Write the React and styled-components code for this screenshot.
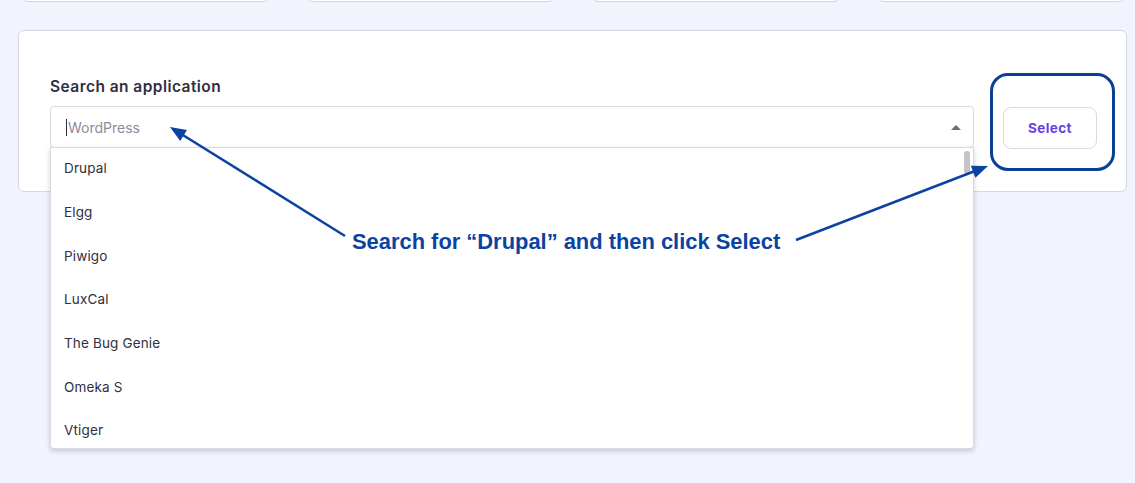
import React from 'react'
import styled, { createGlobalStyle } from 'styled-components'

const GlobalStyle = createGlobalStyle`
  html, body {
    margin: 0;
    padding: 0;
    background: #f1f3fd;
    font-family: Inter, "Noto Sans", "Liberation Sans", sans-serif;
    overflow: hidden;
  }
`

const Page = styled.div`
  position: relative;
  display: flow-root;
  width: 1135px;
  height: 483px;
  padding: 0 8px 0 18px;
  box-sizing: border-box;
`

const StatRow = styled.div`
  display: grid;
  grid-template-columns: repeat(4, 248px);
  column-gap: 37px;
  margin: -40px 0 0 4px;
  height: 42px;
`

const StatCard = styled.div`
  background: #fff;
  border: 1px solid #d6d6df;
  border-radius: 6px;
`

const Panel = styled.section`
  margin-top: 28px;
  width: 1109px;
  height: 162px;
  box-sizing: border-box;
  background: #fff;
  border: 1px solid #d6d6df;
  border-radius: 6px;
  padding: 46px 29px 0 31px;
`

const Label = styled.div`
  font-size: 15.5px;
  font-weight: 600;
  color: #2f2f3d;
  margin-bottom: 10px;
  letter-spacing: 0.45px;
`

const Row = styled.div`
  display: flex;
  align-items: flex-start;
  gap: 29px;
`

const Combo = styled.div`
  position: relative;
  flex: 1;
`

const Input = styled.div`
  height: 42px;
  box-sizing: border-box;
  border: 1px solid #dadae2;
  border-radius: 4px;
  display: flex;
  align-items: center;
  padding: 0 10px 0 15px;
  font-size: 14px;
  color: #8c8c9c;
`

const Caret = styled.span`
  width: 1px;
  height: 17px;
  background: #2f2f3d;
  margin-right: 1px;
`

const Arrow = styled.span`
  margin-left: auto;
  width: 0;
  height: 0;
  border-left: 5px solid transparent;
  border-right: 5px solid transparent;
  border-bottom: 5px solid #6d6d7a;
  margin-right: 2px;
`

const Menu = styled.ul`
  position: absolute;
  left: 0;
  right: 0;
  top: 41px;
  margin: 0;
  padding: 0;
  list-style: none;
  height: 300px;
  overflow: hidden;
  background: #fff;
  border: 1px solid #dadae2;
  border-radius: 0 0 4px 4px;
  box-shadow: 0 2px 5px rgba(40, 40, 70, 0.22);
  z-index: 2;
`

const Item = styled.li`
  height: 43.7px;
  display: flex;
  align-items: center;
  padding-left: 13px;
  padding-bottom: 3px;
  box-sizing: border-box;
  font-size: 13.5px;
  color: #2f2f3d;
  letter-spacing: 0.15px;
`

const Thumb = styled.div`
  position: absolute;
  top: 3px;
  right: 3px;
  width: 6px;
  height: 23px;
  border-radius: 3px;
  background: #c4c4c8;
`

const Highlight = styled.div`
  margin-top: -33px;
  padding: 31px 0 0 10px;
  width: 125px;
  height: 98px;
  box-sizing: border-box;
  border: 3px solid #0b3f96;
  border-radius: 18px;
  margin-left: -13px;
  margin-right: -18px;
`

const SelectButton = styled.button`
  width: 94px;
  height: 42px;
  box-sizing: border-box;
  background: #fff;
  border: 1px solid #dadae2;
  border-radius: 8px;
  font-family: inherit;
  font-size: 13.5px;
  font-weight: 700;
  color: #673de6;
  letter-spacing: 0.4px;
`

const Callout = styled.div`
  position: absolute;
  left: 352px;
  top: 229px;
  font-family: "Liberation Sans", Arial, sans-serif;
  font-weight: 700;
  font-size: 21.9px;
  color: #0b44a0;
  white-space: nowrap;
  z-index: 3;
`

const Arrows = styled.svg`
  position: absolute;
  left: 0;
  top: 0;
  pointer-events: none;
  z-index: 3;
`

const apps = ['Drupal', 'Elgg', 'Piwigo', 'LuxCal', 'The Bug Genie', 'Omeka S', 'Vtiger']

const App = () => {
  return (
    <Page>
      <GlobalStyle />
      <StatRow>
        <StatCard />
        <StatCard />
        <StatCard />
        <StatCard />
      </StatRow>
      <Panel>
        <Label>Search an application</Label>
        <Row>
          <Combo>
            <Input>
              <Caret />
              WordPress
              <Arrow />
            </Input>
            <Menu>
              {apps.map(a => <Item key={a}>{a}</Item>)}
              <Thumb />
            </Menu>
          </Combo>
          <Highlight>
            <SelectButton>Select</SelectButton>
          </Highlight>
        </Row>
      </Panel>
      <Callout>Search for “Drupal” and then click Select</Callout>
      <Arrows width="1135" height="483" viewBox="0 0 1135 483">
        <line x1="345" y1="236" x2="182" y2="134.5" stroke="#0b44a0" strokeWidth="2.6" />
        <polygon points="170,127 187,130 180.2,141" fill="#0b44a0" />
        <line x1="796" y1="240" x2="975" y2="171" stroke="#0b44a0" strokeWidth="2.6" />
        <polygon points="988,166 975.4,177.8 970.8,165.7" fill="#0b44a0" />
      </Arrows>
    </Page>
  )
}

export default App
